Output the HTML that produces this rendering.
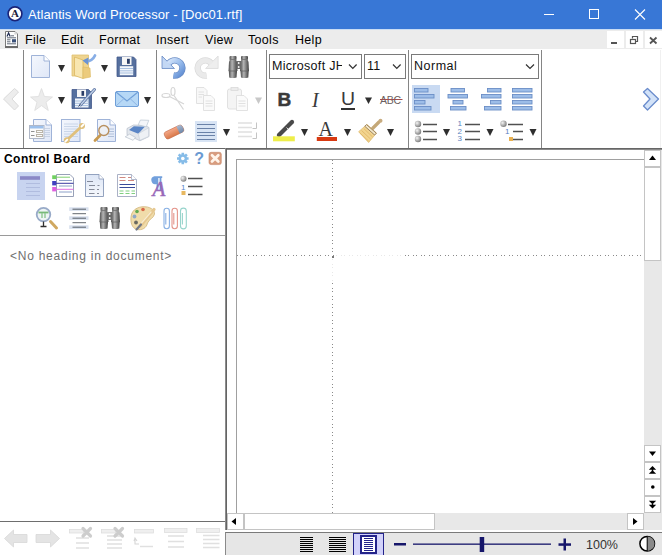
<!DOCTYPE html>
<html><head><meta charset="utf-8">
<style>
*{margin:0;padding:0;box-sizing:border-box}
html,body{width:662px;height:555px;overflow:hidden;background:#fff;font-family:"Liberation Sans",sans-serif}
.a{position:absolute}
.t{position:absolute;white-space:pre;line-height:1}
svg{position:absolute;overflow:visible}
.sep{position:absolute;top:50px;width:1px;height:98px;background:#858585}
.tri{position:absolute;width:0;height:0;border-left:3.5px solid transparent;border-right:3.5px solid transparent;border-top:7px solid #303030}
.cbo{position:absolute;top:54px;height:25px;border:1px solid #7a7a7a;background:#fff}
</style></head><body>
<!-- title bar -->
<div class="a" style="left:0;top:0;width:662px;height:29px;background:#3877d6"></div>
<div class="a" style="left:0;top:29px;width:662px;height:1px;background:#c9dcf4"></div>
<div class="a" style="left:0;top:30px;width:662px;height:19px;background:#ececec"></div>
<!-- toolbar bottom line -->
<div class="a" style="left:0;top:148px;width:662px;height:1px;background:#666"></div>
<div class="a" style="left:226px;top:149px;width:436px;height:1px;background:#8a8a8a"></div>
<!-- separators -->
<div class="a" style="left:660px;top:50px;width:1px;height:98px;background:#f0f0f0"></div>
<div class="sep" style="left:23px"></div>
<div class="sep" style="left:156px"></div>
<div class="sep" style="left:266px"></div>
<div class="sep" style="left:408px"></div>
<div class="sep" style="left:541px"></div>
<!-- panel/doc divider -->
<div class="a" style="left:225px;top:148px;width:1px;height:382px;background:#8c8c8c"></div>
<div class="a" style="left:226px;top:148px;width:1px;height:382px;background:#646464"></div>
<div class="a" style="left:0;top:235px;width:225px;height:1px;background:#9a9a9a"></div>
<div class="a" style="left:0;top:521px;width:225px;height:1px;background:#6e6e6e"></div>

<!-- title content -->
<svg style="left:0;top:0" width="30" height="30">
<circle cx="15" cy="13.8" r="6.9" fill="#fff" stroke="#1a2378" stroke-width="1.6"/>
<text x="15" y="17" text-anchor="middle" font-family="Liberation Serif" font-size="11" font-weight="bold" fill="#1a1a3a">A</text>
</svg>
<div class="t" style="left:28px;top:8px;font-size:13px;letter-spacing:0.1px;color:#fff">Atlantis Word Processor - [Doc01.rtf]</div>
<div class="a" style="left:544px;top:14px;width:10px;height:1px;background:#fff"></div>
<div class="a" style="left:589px;top:9px;width:10px;height:10px;border:1px solid #fff"></div>
<svg style="left:0;top:0" width="662" height="30"><path d="M635 9.5 L645 19.5 M645 9.5 L635 19.5" stroke="#fff" stroke-width="1.1"/></svg>
<!-- menu -->
<div class="t" style="left:25px;top:34px;font-size:12.5px;letter-spacing:0.3px;color:#000">File</div>
<div class="t" style="left:61px;top:34px;font-size:12.5px;letter-spacing:0.3px;color:#000">Edit</div>
<div class="t" style="left:99px;top:34px;font-size:12.5px;letter-spacing:0.3px;color:#000">Format</div>
<div class="t" style="left:156px;top:34px;font-size:12.5px;letter-spacing:0.3px;color:#000">Insert</div>
<div class="t" style="left:205px;top:34px;font-size:12.5px;letter-spacing:0.3px;color:#000">View</div>
<div class="t" style="left:248px;top:34px;font-size:12.5px;letter-spacing:0.3px;color:#000">Tools</div>
<div class="t" style="left:295px;top:34px;font-size:12.5px;letter-spacing:0.3px;color:#000">Help</div>
<!-- MDI buttons -->
<div class="a" style="left:607px;top:31px;width:17px;height:17px;background:#fff"></div>
<div class="a" style="left:626px;top:31px;width:17px;height:17px;background:#fff"></div>
<div class="a" style="left:645px;top:31px;width:17px;height:17px;background:#fff"></div>
<div class="a" style="left:611px;top:42px;width:6px;height:2px;background:#555"></div>
<svg style="left:0;top:0" width="662" height="50">
<rect x="630.5" y="39.5" width="5" height="4" fill="none" stroke="#555" stroke-width="1.2"/>
<path d="M632.5 38.5 V36.5 H637.5 V41.5 H635.5" fill="none" stroke="#555" stroke-width="1.2"/>
<path d="M650 37.5 L656.5 43.5 M656.5 37.5 L650 43.5" stroke="#555" stroke-width="1.8"/>
</svg>

<!-- TOOLBAR ICONS -->
<svg style="left:0;top:0" width="662" height="150">
<defs>
<linearGradient id="gPage" x1="0" y1="0" x2="1" y2="1"><stop offset="0" stop-color="#f4f7fd"/><stop offset="1" stop-color="#dfe7f7"/></linearGradient>
<linearGradient id="gFold" x1="0" y1="0" x2="0" y2="1"><stop offset="0" stop-color="#f0c870"/><stop offset="1" stop-color="#e6c27a"/></linearGradient>
<linearGradient id="gBlue" x1="0" y1="0" x2="1" y2="1"><stop offset="0" stop-color="#a8c8f0"/><stop offset="1" stop-color="#4a7ac8"/></linearGradient>
<linearGradient id="gGrayArrow" x1="0" y1="0" x2="1" y2="1"><stop offset="0" stop-color="#e8e8e8"/><stop offset="1" stop-color="#d6d6d6"/></linearGradient>
<linearGradient id="gBino" x1="0" y1="0" x2="1" y2="0"><stop offset="0" stop-color="#4a4a4a"/><stop offset=".4" stop-color="#b4b4b4"/><stop offset="1" stop-color="#404040"/></linearGradient>
</defs>
<!-- left chevron -->
<path d="M3.5 99 L14.5 88.5 L18.5 92 L12 99 L18.5 106 L14.5 110 Z" fill="#ededed" stroke="#dadada" stroke-width="1" stroke-linejoin="round"/>
<!-- right chevron -->
<path d="M658.5 99 L647.5 88.5 L643.5 92 L650 99 L643.5 106 L647.5 110 Z" fill="#d2e2f8" stroke="#6a8ccc" stroke-width="1.3" stroke-linejoin="round"/>

<!-- ROW1 G1 -->
<path d="M31.5 55.5 H44 L49.5 61 V77.5 H31.5 Z" fill="url(#gPage)" stroke="#9fb3d8"/>
<path d="M44 55.5 V61 H49.5" fill="#fff" stroke="#9fb3d8"/>
<polygon points="58,65 65,65 61.5,72" fill="#2f2f2f"/>
<!-- folder -->
<path d="M72 55 H88.5 V76 H72 Z" fill="#efd490" stroke="#e0c070" stroke-width=".8"/>
<path d="M74.5 57 L83 60 V78.5 L74.5 75.5 Z" fill="#f8e6b0" stroke="#dcb860" stroke-width=".8"/>
<path d="M83 67 L90 68 L90.5 77 L83 78.5 Z" fill="#eccb7c" stroke="#dcb860" stroke-width=".6"/>
<path d="M86 61.5 Q92.5 61 95 55.5" fill="none" stroke="#88aee6" stroke-width="2.8" stroke-linecap="round"/>
<path d="M82.5 60.5 L88.5 57.5 L88 65 Z" fill="#6a94d4"/>
<polygon points="101,65 108,65 104.5,72" fill="#2f2f2f"/>
<!-- floppy -->
<path d="M117 57 H133.5 L136 59.5 V76.5 H117 Z" fill="#56709e" stroke="#42588a" stroke-width=".8"/>
<rect x="122" y="57" width="9.5" height="8" fill="#f6f6f6"/>
<rect x="127" y="58.8" width="2.8" height="5" fill="#2b3d66"/>
<rect x="119.8" y="66.2" width="13.4" height="9" fill="#f2f6fb"/>
<path d="M120 68.5 H133 M120 70.8 H133 M120 73 H133" stroke="#a8c0e0" stroke-width="1"/>

<!-- ROW2 G1 -->
<path d="M41.5 88.5 L44.4 96.5 L52.5 97 L46 102.2 L48.3 110.5 L41.5 105.6 L34.7 110.5 L37 102.2 L30.5 97 L38.6 96.5 Z" fill="#ececec" stroke="#dcdcdc" stroke-width=".8"/>
<polygon points="58,97 65,97 61.5,104" fill="#2f2f2f"/>
<path d="M72 89.5 H88.5 L91.5 92.5 V108.5 H72 Z" fill="#56709e" stroke="#42588a" stroke-width=".8"/>
<rect x="77" y="89.5" width="9" height="7.5" fill="#f6f6f6"/>
<rect x="81.5" y="91" width="2.6" height="4.8" fill="#2b3d66"/>
<rect x="75" y="98.5" width="13.5" height="9" fill="#f2f6fb"/>
<path d="M75 101 H88.5 M75 103.3 H88.5 M75 105.6 H88.5" stroke="#a8c0e0"/>
<path d="M80.5 105 L94.5 89.5" stroke="#6078a4" stroke-width="3" stroke-linecap="round"/>
<path d="M80.5 105 L94.5 89.5" stroke="#c0d0e8" stroke-width="1.3" stroke-linecap="round"/>
<path d="M78.5 106.5 L80.5 104.5" stroke="#404860" stroke-width="1"/>
<polygon points="101,97 108,97 104.5,104" fill="#2f2f2f"/>
<!-- envelope -->
<rect x="115.5" y="91.5" width="23" height="15" rx="1.5" fill="#b6d8f6" stroke="#6f9fd8"/>
<path d="M116 92 L127 101 L138 92" fill="none" stroke="#6f9fd8" stroke-width="1.1"/>
<path d="M116 106 L124 98.5 M138 106 L130 98.5" fill="none" stroke="#8fb6e4" stroke-width="1"/>
<polygon points="144,97 151,97 147.5,104" fill="#2f2f2f"/>

<!-- ROW3 G1 -->
<path d="M33.5 119.5 H46 L51.5 125 V141.5 H33.5 Z" fill="url(#gPage)" stroke="#9fb3d8"/>
<path d="M46 119.5 V125 H51.5" fill="#fff" stroke="#9fb3d8"/>
<path d="M44.5 128.5 H50 M44.5 130.5 H50 M44.5 132.5 H50 M44.5 134.5 H50 M44.5 136.5 H50" stroke="#c0cce0" stroke-width=".8"/>
<rect x="29.5" y="125.5" width="14.5" height="13" fill="#fbfbfb" stroke="#b0b8c8"/>
<rect x="30" y="126" width="13.5" height="2.5" fill="#9cc0ec"/>
<rect x="36.5" y="130.5" width="6" height="2" fill="none" stroke="#bab4a8" stroke-width="1"/>
<rect x="36.5" y="134.5" width="6" height="2" fill="none" stroke="#bab4a8" stroke-width="1"/>
<path d="M31 131.5 H34.5 M31 135.5 H34.5" stroke="#909090" stroke-width="1"/>
<!-- wrench page -->
<rect x="61.5" y="119.5" width="18.5" height="22" fill="url(#gPage)" stroke="#9fb3d8"/>
<path d="M64 124 H78 M64 126.5 H78 M64 129 H78 M64 131.5 H78 M64 134 H78 M64 136.5 H78" stroke="#c2cfe4" stroke-width=".8"/>
<path d="M68 139 L81 127" stroke="#e0c07c" stroke-width="2.8" stroke-linecap="round"/>
<circle cx="82" cy="126" r="3" fill="#e0c07c"/>
<circle cx="66.8" cy="140.2" r="3" fill="#e0c07c"/>
<path d="M83.5 124.5 L81.5 126.5 M65.3 141.7 L67.3 139.7" stroke="#fff" stroke-width="1.8" stroke-linecap="round"/>
<!-- magnifier page -->
<path d="M97.5 119.5 H110 L115.5 125 V141.5 H97.5 Z" fill="url(#gPage)" stroke="#9fb3d8"/>
<path d="M110 119.5 V125 H115.5" fill="#fff" stroke="#9fb3d8"/>
<path d="M108 129 H114 M108 131.5 H114 M108 134 H114 M108 136.5 H114" stroke="#b0c0da"/>
<path d="M95 140.5 L100 135.5" stroke="#c89a50" stroke-width="2.8" stroke-linecap="round"/>
<circle cx="103.8" cy="130.5" r="5" fill="#eef0f2" fill-opacity=".7" stroke="#b89060" stroke-width="1.4"/>
<!-- printer -->
<polygon points="127,128.5 133.5,125 145,125.5 149,127.5 149,136.5 140,140.8 127,134.8" fill="#e2e6ec" stroke="#b4bcc8" stroke-width=".7"/>
<polygon points="138.2,124.8 140.4,120 148.8,120.3 146.3,126.8" fill="#f4f6fa" stroke="#b8c4d0" stroke-width=".7"/>
<polygon points="129,130 133.8,126.2 144.8,126.8 138.3,133.8" fill="#5b86c6"/>
<polygon points="138.3,133.8 148.6,127.8 148.6,136.4 139.8,140.3" fill="#eef1f5" stroke="#c4ccd6" stroke-width=".6"/>
<polygon points="125.2,136.8 129.6,134.1 135.5,137.4 133.1,140.3" fill="#f6f8fa" stroke="#b8c0cc" stroke-width=".7"/>
<!-- GROUP 2 ROW1 -->
<defs><linearGradient id="gUndo" x1="0" y1="0" x2="1" y2="1"><stop offset="0" stop-color="#d4e4fa"/><stop offset=".5" stop-color="#98bcec"/><stop offset="1" stop-color="#5f8cd2"/></linearGradient></defs>
<g id="undo">
<path d="M168.6 63.6 A7.6 7.6 0 1 1 173.5 75.5" fill="none" stroke="#6a8cc4" stroke-width="6.4"/>
<polygon points="162,56 162,68.5 174.5,68.5" fill="#b4ccf0" stroke="#6a8cc4" stroke-width=".8" stroke-linejoin="round"/>
<path d="M168.6 63.6 A7.6 7.6 0 1 1 173.5 75.5" fill="none" stroke="url(#gUndo)" stroke-width="5"/>
<polygon points="162.8,58 162.8,67.8 172.6,67.8" fill="#c4d8f4"/>
</g>
<g transform="translate(380.1,0) scale(-1,1)">
<path d="M168.6 63.6 A7.6 7.6 0 1 1 173.5 75.5" fill="none" stroke="#dadada" stroke-width="6.4"/>
<polygon points="162,56 162,68.5 174.5,68.5" fill="#ececec" stroke="#dadada" stroke-width=".8" stroke-linejoin="round"/>
<path d="M168.6 63.6 A7.6 7.6 0 1 1 173.5 75.5" fill="none" stroke="#eaeaea" stroke-width="5"/>
<polygon points="162.8,58 162.8,67.8 172.6,67.8" fill="#eeeeee"/>
</g>
<!-- binoculars -->
<g id="bino">
<rect x="229.5" y="56" width="7" height="3.5" rx="1" fill="url(#gBino)"/>
<rect x="241" y="56" width="7" height="3.5" rx="1" fill="url(#gBino)"/>
<path d="M230 59.5 H236 L237 62 L237.5 71 H228.5 L229 62 Z" fill="url(#gBino)"/>
<path d="M241.5 59.5 H247.5 L248.5 62 L249 71 H240 L240.5 62 Z" fill="url(#gBino)"/>
<path d="M228.8 71 H237 L236.5 77.5 Q232.7 78.5 229.2 77.5 Z" fill="url(#gBino)"/>
<path d="M240.5 71 H248.7 L248.3 77.5 Q244.7 78.5 241 77.5 Z" fill="url(#gBino)"/>
<path d="M228.8 71 H237 M240.5 71 H248.7 M229.5 59.5 H236.5 M241 59.5 H248" stroke="#606060" stroke-width=".7"/>
<rect x="236.5" y="61" width="4.5" height="8" fill="#6a6a6a"/>
<circle cx="238.7" cy="63" r=".9" fill="#f4f4f4"/><circle cx="238.7" cy="67" r=".9" fill="#f4f4f4"/>
</g>

<!-- GROUP 2 ROW2 (disabled) -->
<g fill="none" stroke="#d6d6d6" stroke-width="1.2">
<ellipse cx="173" cy="91.5" rx="2" ry="4"/>
<ellipse cx="166" cy="95.5" rx="4" ry="2"/>
<path d="M174 95.5 L183.5 109.5 M169.5 96.5 L184 104"/>
</g>
<g stroke="#dadada" stroke-width=".8">
<path d="M196.5 87.5 H204 L207 90.5 V103.5 H196.5 Z" fill="#f8f8f8"/>
<path d="M203.5 95.5 H211 L214.5 99 V110.5 H203.5 Z" fill="#fafafa"/>
<path d="M205.5 101 H212.5 M205.5 103.5 H212.5 M205.5 106 H212.5" />
<path d="M198.5 92 H204 M198.5 94.5 H204 M198.5 97 H202"/>
<rect x="227.5" y="89" width="14" height="20" rx="2" fill="#f4f4f4"/>
<rect x="231" y="87.5" width="7" height="3" fill="#ececec"/>
<path d="M236.5 95.5 H244 L247.5 99 V110.5 H236.5 Z" fill="#fbfbfb"/>
<path d="M238.5 101 H245.5 M238.5 103.5 H245.5 M238.5 106 H245.5"/>
</g>
<polygon points="255,97.5 262,97.5 258.5,104" fill="#c8c8c8"/>

<!-- GROUP 2 ROW3 -->
<defs><linearGradient id="gEr" x1="0" y1="0" x2="0" y2="1"><stop offset="0" stop-color="#f4a888"/><stop offset="1" stop-color="#d87848"/></linearGradient>
<linearGradient id="gEr2" x1="0" y1="0" x2="0" y2="1"><stop offset="0" stop-color="#a8b8d0"/><stop offset="1" stop-color="#7088a8"/></linearGradient></defs>
<g transform="translate(174,132) rotate(-26)">
<rect x="-10" y="-3.8" width="20" height="7.6" rx="2.5" fill="url(#gEr)" stroke="#c87050" stroke-width=".6"/>
<path d="M4.5 -3.8 H7.5 A2.5 2.5 0 0 1 10 -1.3 V1.3 A2.5 2.5 0 0 1 7.5 3.8 H4.5 Z" fill="url(#gEr2)"/>
</g>
<rect x="195" y="121" width="22" height="21" fill="#d8e4f4"/>
<path d="M197 124.5 H215 M197 128.5 H215 M197 132.5 H215 M197 135.5 H215 M197 139.5 H215" stroke="#6a82a8" stroke-width="1.1"/>
<polygon points="223,129 230,129 226.5,136" fill="#2f2f2f"/>
<g stroke="#e0e0e0" stroke-width="1.6">
<path d="M238 123 H252 M238 127.5 H252 M238 132 H252 M238 136.5 H252"/>
</g>
<g stroke="#c4c4c4" stroke-width="1" fill="none"><path d="M256.5 122.5 V128.5 H252.5 M256.5 132.5 V138.5 H252.5"/></g>
</svg>

<!-- FONT GROUP -->
<div class="cbo" style="left:269px;width:93px;overflow:hidden"></div>
<div class="t" style="left:272px;top:60px;font-size:12.5px;letter-spacing:0.3px;color:#111;width:70px;overflow:hidden">Microsoft JH</div>
<div class="cbo" style="left:364px;width:42px"></div>
<div class="t" style="left:367px;top:60px;font-size:12.5px;letter-spacing:0.3px;color:#111">11</div>
<div class="cbo" style="left:411px;width:128px"></div>
<div class="t" style="left:414px;top:60px;font-size:12.5px;letter-spacing:0.5px;color:#111">Normal</div>
<div class="t" style="left:277.5px;top:90px;font-size:19px;font-weight:bold;color:#3a3a3a;-webkit-text-stroke:0.5px #3a3a3a">B</div>
<div class="t" style="left:312px;top:90px;font-size:20px;font-style:italic;font-family:'Liberation Serif',serif;color:#3a3a3a">I</div>
<div class="t" style="left:340.5px;top:90px;font-size:18px;color:#3a3a3a;transform:scaleX(1.08);transform-origin:0 0">U</div>
<div class="t" style="left:380px;top:94.5px;font-size:10.5px;color:#6a6060;letter-spacing:-0.2px">ABC</div>
<div class="t" style="left:318.5px;top:119px;font-size:20px;font-family:'Liberation Serif',serif;color:#3a3a3a">A</div>
<svg style="left:0;top:0" width="662" height="150">
<path d="M349 64.5 L352.8 68.5 L356.6 64.5" fill="none" stroke="#333" stroke-width="1.2"/>
<path d="M393 64.5 L396.8 68.5 L400.6 64.5" fill="none" stroke="#333" stroke-width="1.2"/>
<path d="M526 64.5 L530 68.5 L534 64.5" fill="none" stroke="#333" stroke-width="1.2"/>
<rect x="341" y="108" width="14" height="2" fill="#333"/>
<polygon points="365,97.5 372,97.5 368.5,104" fill="#2f2f2f"/>
<path d="M380 99.5 H402.5" stroke="#a05050" stroke-width="1"/>
<!-- highlighter -->
<path d="M279 135 L292 122" stroke="#4a4a4a" stroke-width="4.2" stroke-linecap="round"/>
<path d="M286.5 127.5 L289 130" stroke="#fff" stroke-width=".8"/>
<path d="M277.5 136 L280 133" stroke="#4a4a4a" stroke-width="2"/>
<rect x="273" y="136.3" width="21.8" height="5" fill="#eeee4a"/>
<polygon points="301,129 308,129 304.5,136" fill="#2f2f2f"/>
<rect x="316.8" y="137" width="20.2" height="4" fill="#d83a12"/>
<polygon points="344,129 351,129 347.5,136" fill="#2f2f2f"/>
<!-- brush -->
<path d="M372.5 128.5 L379 122" stroke="#c4a878" stroke-width="3.2" stroke-linecap="round"/>
<circle cx="380.5" cy="120.8" r="2" fill="#c8ac80"/>
<path d="M358.6 131.7 L367 124.4 L376.5 133 L368.6 142.5 Z" fill="#f2d48e" stroke="#dcb868" stroke-width=".7"/>
<path d="M366.5 124.6 L376.3 133.2 L374.6 135 L364.8 126.3 Z" fill="#f4e8c8" stroke="#8a7050" stroke-width=".8"/>
<path d="M361.5 130.5 L370.5 139 M363.8 128.5 L372.6 137 M359.8 133 L368.5 141" stroke="#dcb060" stroke-width=".7"/>
<polygon points="387,129 394,129 390.5,136" fill="#2f2f2f"/>

<!-- PARAGRAPH GROUP -->
<rect x="412" y="85" width="28" height="28" fill="#c9daf2"/>
<g fill="#9dbde8" stroke="#6a8ec6" stroke-width=".9">
<rect x="414.5" y="88.5" width="13.5" height="3.5"/>
<rect x="414.5" y="94.5" width="19.5" height="3.5"/>
<rect x="414.5" y="100.5" width="10.5" height="3.5"/>
<rect x="414.5" y="106.5" width="16.5" height="3.5"/>
<rect x="451" y="88.5" width="13.5" height="3.5"/>
<rect x="448" y="94.5" width="19.5" height="3.5"/>
<rect x="453" y="100.5" width="10" height="3.5"/>
<rect x="450.5" y="106.5" width="15.5" height="3.5"/>
<rect x="487.5" y="88.5" width="13.5" height="3.5"/>
<rect x="481.5" y="94.5" width="19.5" height="3.5"/>
<rect x="490.5" y="100.5" width="10.5" height="3.5"/>
<rect x="484.5" y="106.5" width="16.5" height="3.5"/>
<rect x="512.5" y="88.5" width="19.5" height="3.5"/>
<rect x="512.5" y="94.5" width="19.5" height="3.5"/>
<rect x="512.5" y="100.5" width="19.5" height="3.5"/>
<rect x="512.5" y="106.5" width="19.5" height="3.5"/>
</g>
<defs><radialGradient id="gBall" cx=".35" cy=".35" r=".7"><stop offset="0" stop-color="#f4f4f4"/><stop offset="1" stop-color="#7a7a7a"/></radialGradient></defs>
<circle cx="418" cy="124" r="3.2" fill="url(#gBall)"/>
<circle cx="418" cy="131.5" r="3.2" fill="url(#gBall)"/>
<circle cx="418" cy="139" r="3.2" fill="url(#gBall)"/>
<path d="M423 124.5 H437 M423 131.5 H437 M423 139.5 H437" stroke="#505050" stroke-width="1.3"/>
<polygon points="443,129 450,129 446.5,136" fill="#2f2f2f"/>
<path d="M465 124.5 H480 M465 131.5 H480 M465 139.5 H480" stroke="#505050" stroke-width="1.3"/>
<polygon points="486.5,129 493.5,129 490,136" fill="#2f2f2f"/>
<circle cx="503.5" cy="123.8" r="3.2" fill="url(#gBall)"/>
<path d="M508 124.5 H523 M513 131.5 H523 M513 139.5 H523" stroke="#505050" stroke-width="1.3"/>
<rect x="509" y="137" width="4" height="4" fill="#e8b050"/>
<polygon points="529.5,129 536.5,129 533,136" fill="#2f2f2f"/>
</svg>
<div class="t" style="left:457.5px;top:120px;font-size:8px;color:#5a82c0;line-height:7.5px">1<br>2<br>3</div>
<div class="t" style="left:505px;top:128px;font-size:8px;color:#5a82c0">1</div>

<!-- CONTROL BOARD -->
<div class="t" style="left:4px;top:152.5px;font-size:12px;font-weight:bold;letter-spacing:0.45px;color:#000">Control Board</div>
<div class="t" style="left:10px;top:250px;font-size:12px;letter-spacing:0.75px;color:#707070">&lt;No heading in document&gt;</div>
<svg style="left:0;top:145px" width="226" height="100" viewBox="0 145 226 100">
<defs>
<linearGradient id="gPg2" x1="0" y1="0" x2="0" y2="1"><stop offset="0" stop-color="#dde6f6"/><stop offset="1" stop-color="#f6f8fc"/></linearGradient>
<radialGradient id="gBall2" cx=".35" cy=".35" r=".7"><stop offset="0" stop-color="#f4f4f4"/><stop offset="1" stop-color="#7a7a7a"/></radialGradient>
<linearGradient id="gBino2" x1="0" y1="0" x2="1" y2="0"><stop offset="0" stop-color="#707070"/><stop offset=".45" stop-color="#d0d0d0"/><stop offset="1" stop-color="#606060"/></linearGradient>
</defs>
<!-- gear -->
<g transform="translate(182.8,158.5)">
<circle r="4.3" fill="#86bce8"/>
<g stroke="#86bce8" stroke-width="2.6">
<path d="M0 -5.8 V5.8 M-5.8 0 H5.8 M-4.1 -4.1 L4.1 4.1 M4.1 -4.1 L-4.1 4.1"/>
</g>
<circle r="1.8" fill="#fff"/>
</g>
<text x="194.3" y="164" font-family="Liberation Sans" font-weight="bold" font-size="16" fill="#6a9ad2">?</text>
<rect x="209" y="152.3" width="12.3" height="12.3" rx="2" fill="#d89c7e" stroke="#c8886a" stroke-width=".6"/>
<path d="M212 155.3 L218.3 161.6 M218.3 155.3 L212 161.6" stroke="#fff4ea" stroke-width="2.8" stroke-linecap="round"/>

<!-- row1 icons -->
<rect x="17" y="172" width="28" height="28" fill="#c8d4f0"/>
<rect x="20" y="176.2" width="20" height="3.6" fill="#8a88c6"/>
<path d="M26 183.5 H40 M26 187.5 H40 M26 191.5 H40 M26 195.5 H40" stroke="#adb9dc" stroke-width=".9"/>

<path d="M56.5 174.5 H70 L73.5 178 V196.5 H56.5 Z" fill="#fff" stroke="#8c96b0" stroke-width=".9"/>
<rect x="52.2" y="175.3" width="4" height="3.8" fill="#70d060"/>
<rect x="52.2" y="181" width="4" height="4.4" fill="#4040c0"/>
<rect x="52.2" y="187" width="4" height="4.4" fill="#e060e0"/>
<path d="M56 177.2 H70 " stroke="#80d070" stroke-width="1"/>
<path d="M56 183.3 H73.5" stroke="#3a3aa0" stroke-width="1"/>
<path d="M56 189.3 H73.5" stroke="#e070e0" stroke-width="1"/>
<path d="M59 180.5 H72 M59 186 H72 M59 192 H72" stroke="#8ca0c8" stroke-width="1"/>

<path d="M85.5 174.5 H99 L103.5 179 V196.5 H85.5 Z" fill="url(#gPg2)" stroke="#8898b8" stroke-width=".9"/>
<path d="M99 174.5 V179 H103.5" fill="#fff" stroke="#8898b8" stroke-width=".8"/>
<path d="M87 181.5 H93 M89 185.5 H95 M89 189.5 H94.5 M89 193.5 H94.5 M97.5 185.5 H99.5 M97 189.5 H99 M97 193.5 H99" stroke="#6a7080" stroke-width=".8"/>

<path d="M117.5 174.5 H131.5 L136.5 179.5 V196.5 H117.5 Z" fill="#fff" stroke="#a0a8c0" stroke-width=".9"/>
<path d="M131.5 174.5 V179.5 H136.5" fill="#fff" stroke="#a0a8c0" stroke-width=".8"/>
<path d="M119.5 177.5 H125.5 M128 177.5 H131 M119.5 180.5 H125.5 M128 180.5 H134" stroke="#d08880" stroke-width="1.1"/>
<path d="M119.5 184.5 H135 M119.5 187.5 H135" stroke="#3a4a9a" stroke-width="1.1"/>
<path d="M119.5 191 H123.5 M125.5 191 H129.5 M131.5 191 H135 M119.5 193.5 H123.5 M125.5 193.5 H129.5 M131.5 193.5 H135" stroke="#80d080" stroke-width="1.1"/>

<g fill="#72a0dc">
<path d="M154.3 176.2 H162.2 V178 H161.4 V190 H159.6 V178 H158.3 V190 H156.5 V184 A3.9 3.9 0 0 1 154.3 176.2 Z"/>
</g>
<text x="152.5" y="195.5" font-family="Liberation Serif" font-style="italic" font-size="21" fill="#9868b8" stroke="#9868b8" stroke-width=".5">A</text>

<circle cx="183.5" cy="178.8" r="3" fill="url(#gBall2)"/>
<text x="181" y="189.5" font-family="Liberation Sans" font-size="8" fill="#5a88c8">1</text>
<rect x="181.5" y="191" width="4" height="4" fill="#e8b860"/>
<path d="M188 178.5 H202.5 M188 186.5 H202.5 M188 194.5 H202.5" stroke="#505050" stroke-width="1.3"/>

<!-- row2 icons -->
<circle cx="43.5" cy="214.6" r="6.8" fill="#eef4f4" stroke="#98aac8" stroke-width="1.8"/>
<path d="M38.5 212.5 H48.5" stroke="#78b878" stroke-width="1.8"/>
<path d="M42 213 V218 M45 213 V218" stroke="#90c890" stroke-width="1.4"/>
<path d="M43.5 221.5 V226 M40.5 226.5 H46.5" stroke="#303030" stroke-width="1.3"/>
<path d="M50.5 221.5 L56.5 228" stroke="#d0a860" stroke-width="3" stroke-linecap="round"/>

<rect x="69.2" y="207.3" width="19.3" height="3.6" fill="#d8e0ee"/>
<rect x="69.2" y="216.3" width="19.3" height="3.6" fill="#d8e0ee"/>
<rect x="69.2" y="225.3" width="19.3" height="3.6" fill="#d8e0ee"/>
<path d="M72.5 209.2 H86 M72.5 213.7 H86 M72.5 218.2 H86 M72.5 222.7 H86 M72.5 227.2 H86" stroke="#3a4048" stroke-width=".8"/>

<use href="#bino" transform="translate(-129,151)"/>
<path d="M142 206.8 C150 206 155 210 154.5 214 C154 218 149 219 147.5 223 C146.5 228 142 230.5 137 229.5 C131.5 228 130.5 222 131 217 C131.5 211 136 207.5 142 206.8 Z" fill="#f0dcaa" stroke="#d0b478" stroke-width=".8"/>
<circle cx="137" cy="211.5" r="1.8" fill="#60a850"/>
<circle cx="143" cy="209.5" r="1.8" fill="#d86848"/>
<circle cx="134.5" cy="216.5" r="1.9" fill="#90a8c8"/>
<circle cx="136" cy="222.5" r="1.9" fill="#6a6a60"/>
<path d="M140 226.5 L154 209.5" stroke="#e6c890" stroke-width="3.2" stroke-linecap="round"/>
<path d="M141.5 223 L151 212" stroke="#f8ecd0" stroke-width="1.2" stroke-linecap="round"/>
<path d="M136.5 229.5 L141 224.5" stroke="#707888" stroke-width="2.2" stroke-linecap="round"/>

<g fill="none" stroke-width="1.1">
<path d="M164 211 A2.7 2.7 0 0 1 169.4 211 V226 A2.7 2.7 0 0 1 164 226 Z M165.8 213 V224.5" stroke="#88b0e4"/>
<path d="M172 211 A2.7 2.7 0 0 1 177.4 211 V226 A2.7 2.7 0 0 1 172 226 Z M173.8 213 V224.5" stroke="#e4948a"/>
<path d="M180.5 211 A2.9 2.9 0 0 1 186.3 211 V226 A2.9 2.9 0 0 1 180.5 226 Z M182.4 213 V224.5" stroke="#98d4cc"/>
</g>
</svg>

<!-- DOC AREA -->
<div class="a" style="left:236px;top:159px;width:408px;height:354px;border-left:1px solid #a0a0a0;border-top:1px solid #a0a0a0"></div>
<div class="a" style="left:332px;top:160px;width:1px;height:353px;background:repeating-linear-gradient(to bottom,#8a8a8a 0,#8a8a8a 1px,transparent 1px,transparent 3px,#8a8a8a 3px,#8a8a8a 4px,transparent 4px,transparent 8px)"></div>
<div class="a" style="left:237px;top:255px;width:407px;height:1px;background:repeating-linear-gradient(to right,#8a8a8a 0,#8a8a8a 1px,transparent 1px,transparent 3px,#8a8a8a 3px,#8a8a8a 4px,transparent 4px,transparent 8px)"></div>
<div class="a" style="left:334px;top:255px;width:70px;height:1px;background:rgba(255,255,255,.8)"></div>
<div class="a" style="left:332px;top:257px;width:1px;height:26px;background:rgba(255,255,255,.8)"></div>
<div class="a" style="left:332px;top:256px;width:2px;height:2px;background:#777"></div>
<!-- vscroll -->
<div class="a" style="left:644px;top:150px;width:18px;height:363px;background:#e8e8e8"></div>
<div class="a" style="left:644px;top:150px;width:17px;height:17px;background:#fff;border:1px solid #c4c4c4"></div>
<div class="a" style="left:644px;top:167px;width:17px;height:94px;background:#fff;border:1px solid #c4c4c4"></div>
<div class="a" style="left:644px;top:445px;width:17px;height:17px;background:#fff;border:1px solid #c4c4c4"></div>
<div class="a" style="left:644px;top:462px;width:17px;height:17px;background:#fff;border:1px solid #c4c4c4"></div>
<div class="a" style="left:644px;top:479px;width:17px;height:17px;background:#fff;border:1px solid #c4c4c4"></div>
<div class="a" style="left:644px;top:496px;width:17px;height:17px;background:#fff;border:1px solid #c4c4c4"></div>
<!-- hscroll -->
<div class="a" style="left:227px;top:513px;width:435px;height:17px;background:#e8e8e8"></div>
<div class="a" style="left:227px;top:513px;width:17px;height:17px;background:#fff;border:1px solid #c4c4c4"></div>
<div class="a" style="left:244px;top:513px;width:191px;height:17px;background:#fff;border:1px solid #c4c4c4"></div>
<div class="a" style="left:627px;top:513px;width:17px;height:17px;background:#fff;border:1px solid #c4c4c4"></div>
<div class="a" style="left:227px;top:530px;width:435px;height:2px;background:#fff"></div>
<svg style="left:0;top:0" width="662" height="555">
<polygon points="649,160 656,160 652.5,155.5" fill="#000"/>
<polygon points="649,451.5 656,451.5 652.5,456" fill="#000"/>
<polygon points="648.8,469.8 656.2,469.8 652.5,466" fill="#000"/>
<rect x="651.8" y="469" width="1.4" height="2" fill="#000"/>
<polygon points="648.8,473.8 656.2,473.8 652.5,470.3" fill="#000"/>
<circle cx="652.8" cy="487" r="1.8" fill="#000"/>
<polygon points="648.8,500.8 656.2,500.8 652.5,504.3" fill="#000"/>
<rect x="651.8" y="503.6" width="1.4" height="2" fill="#000"/>
<polygon points="648.8,504.8 656.2,504.8 652.5,508.6" fill="#000"/>
<polygon points="236,518 236,525 231.5,521.5" fill="#000"/>
<polygon points="633,518 633,525 637.5,521.5" fill="#000"/>
</svg>
<!-- STATUS BAR -->
<div class="a" style="left:225px;top:532px;width:437px;height:23px;background:#e6e6e6;border-top:1px solid #7a7a7a;border-left:1px solid #8a8a8a"></div>
<div class="a" style="left:353px;top:533px;width:31px;height:22px;background:#d2d2fa;border:1px solid #23238a;border-bottom:none"></div>
<svg style="left:0;top:0" width="662" height="555">
<g stroke="#000" stroke-width="1">
<path d="M300 537.5 H313 M300 539.5 H313 M300 541.5 H313 M300 543.5 H313 M300 545.5 H313 M300 547.5 H313 M300 549.5 H313 M300 551.5 H313"/>
<path d="M329 537.5 H346 M329 539.5 H346 M329 541.5 H346 M329 543.5 H346 M329 545.5 H346 M329 547.5 H346 M329 549.5 H346 M329 551.5 H346"/>
</g>
<rect x="361" y="536" width="15" height="17" fill="#fff" stroke="#23238a" stroke-width="2"/>
<path d="M364 538.5 H373 M364 540.5 H373 M364 542.5 H373 M364 544.5 H373 M364 546.5 H373 M364 548.5 H373 M364 550.5 H373" stroke="#23238a" stroke-width="1"/>
<rect x="394" y="543" width="12" height="2.5" fill="#16166a"/>
<rect x="413" y="543.5" width="138" height="1.3" fill="#16166a"/>
<rect x="479.7" y="537" width="4.5" height="15" fill="#16166a"/>
<rect x="558.5" y="543.3" width="12.5" height="2.5" fill="#16166a"/>
<rect x="563.5" y="538.5" width="2.5" height="12" fill="#16166a"/>
<circle cx="647.2" cy="543.7" r="7.3" fill="#fff" stroke="#000" stroke-width="1.5"/>
<path d="M647.2 536.4 A7.3 7.3 0 0 1 647.2 551 Z" fill="#8a8a8a"/>
<path d="M647.2 536.4 V551" stroke="#000" stroke-width="1"/>
</svg>
<div class="t" style="left:586px;top:538.5px;font-size:12.5px;color:#333">100%</div>
<!-- BOTTOM NAV (disabled) -->
<svg style="left:0;top:0" width="226" height="555">
<g fill="#e4e4e4" stroke="#d8d8d8" stroke-width=".8">
<path d="M4.5 538.5 L13.5 530 V534.5 H27 V542.5 H13.5 V547 Z"/>
<path d="M59.5 538.5 L50.5 530 V534.5 H36 V542.5 H50.5 V547 Z"/>
</g>
<g fill="#efefef" stroke="#dedede" stroke-width=".8">
<rect x="69.5" y="529.5" width="14" height="3.5"/>
<rect x="101.5" y="529.5" width="14" height="3.5"/>
<rect x="134.5" y="529.5" width="19" height="3.5"/>
<rect x="164.5" y="528.5" width="22.5" height="4"/>
<rect x="196.5" y="528.5" width="23" height="4"/>
</g>
<g stroke="#e0e0e0" stroke-width="1.5">
<path d="M76 538 H89 M76 543 H89 M76 548 H89"/>
<path d="M107 536 H122 M107 540 H122 M107 544 H122 M107 548 H122"/>
<path d="M140 546.5 H153"/>
<path d="M168 536 H184 M168 541.5 H184 M168 547 H184"/>
<path d="M203 535.5 H219.5 M203 539.5 H219.5 M203 543.5 H219.5 M203 547.5 H219.5"/>
</g>
<g stroke="#cdcdcd" stroke-width="3.2" stroke-linecap="round">
<path d="M83 528.5 L90.5 536 M90.5 528.5 L83 536"/>
<path d="M115 528.5 L122.5 536 M122.5 528.5 L115 536"/>
</g>
<path d="M135 538 V544 H139 M134 541 L135 538 L137 541" fill="none" stroke="#d6d6d6" stroke-width="1.1"/>
</svg>

<!-- menu doc icon -->
<svg style="left:0;top:0" width="30" height="50">
<path d="M5.5 31.5 H15 L17.5 34 V47.5 H5.5 Z" fill="#fdfdfd" stroke="#7a7a7a" stroke-width="1"/>
<rect x="5" y="46" width="13" height="2" fill="#6a6a6a"/>
<circle cx="15.5" cy="33.5" r="1.3" fill="#d8d8d8"/>
<path d="M7 36.5 L8.6 33 L10.2 36.5" fill="none" stroke="#1e2a50" stroke-width="1.2"/>
<path d="M11 35.8 H14 M7 37.8 H16 M7 39.8 H10.5 M7 41.8 H10.5 M7 43.8 H16" stroke="#505a6a" stroke-width=".9"/>
<rect x="12" y="39.2" width="4" height="3.2" fill="#3a5078"/>
</svg>
</body></html>
